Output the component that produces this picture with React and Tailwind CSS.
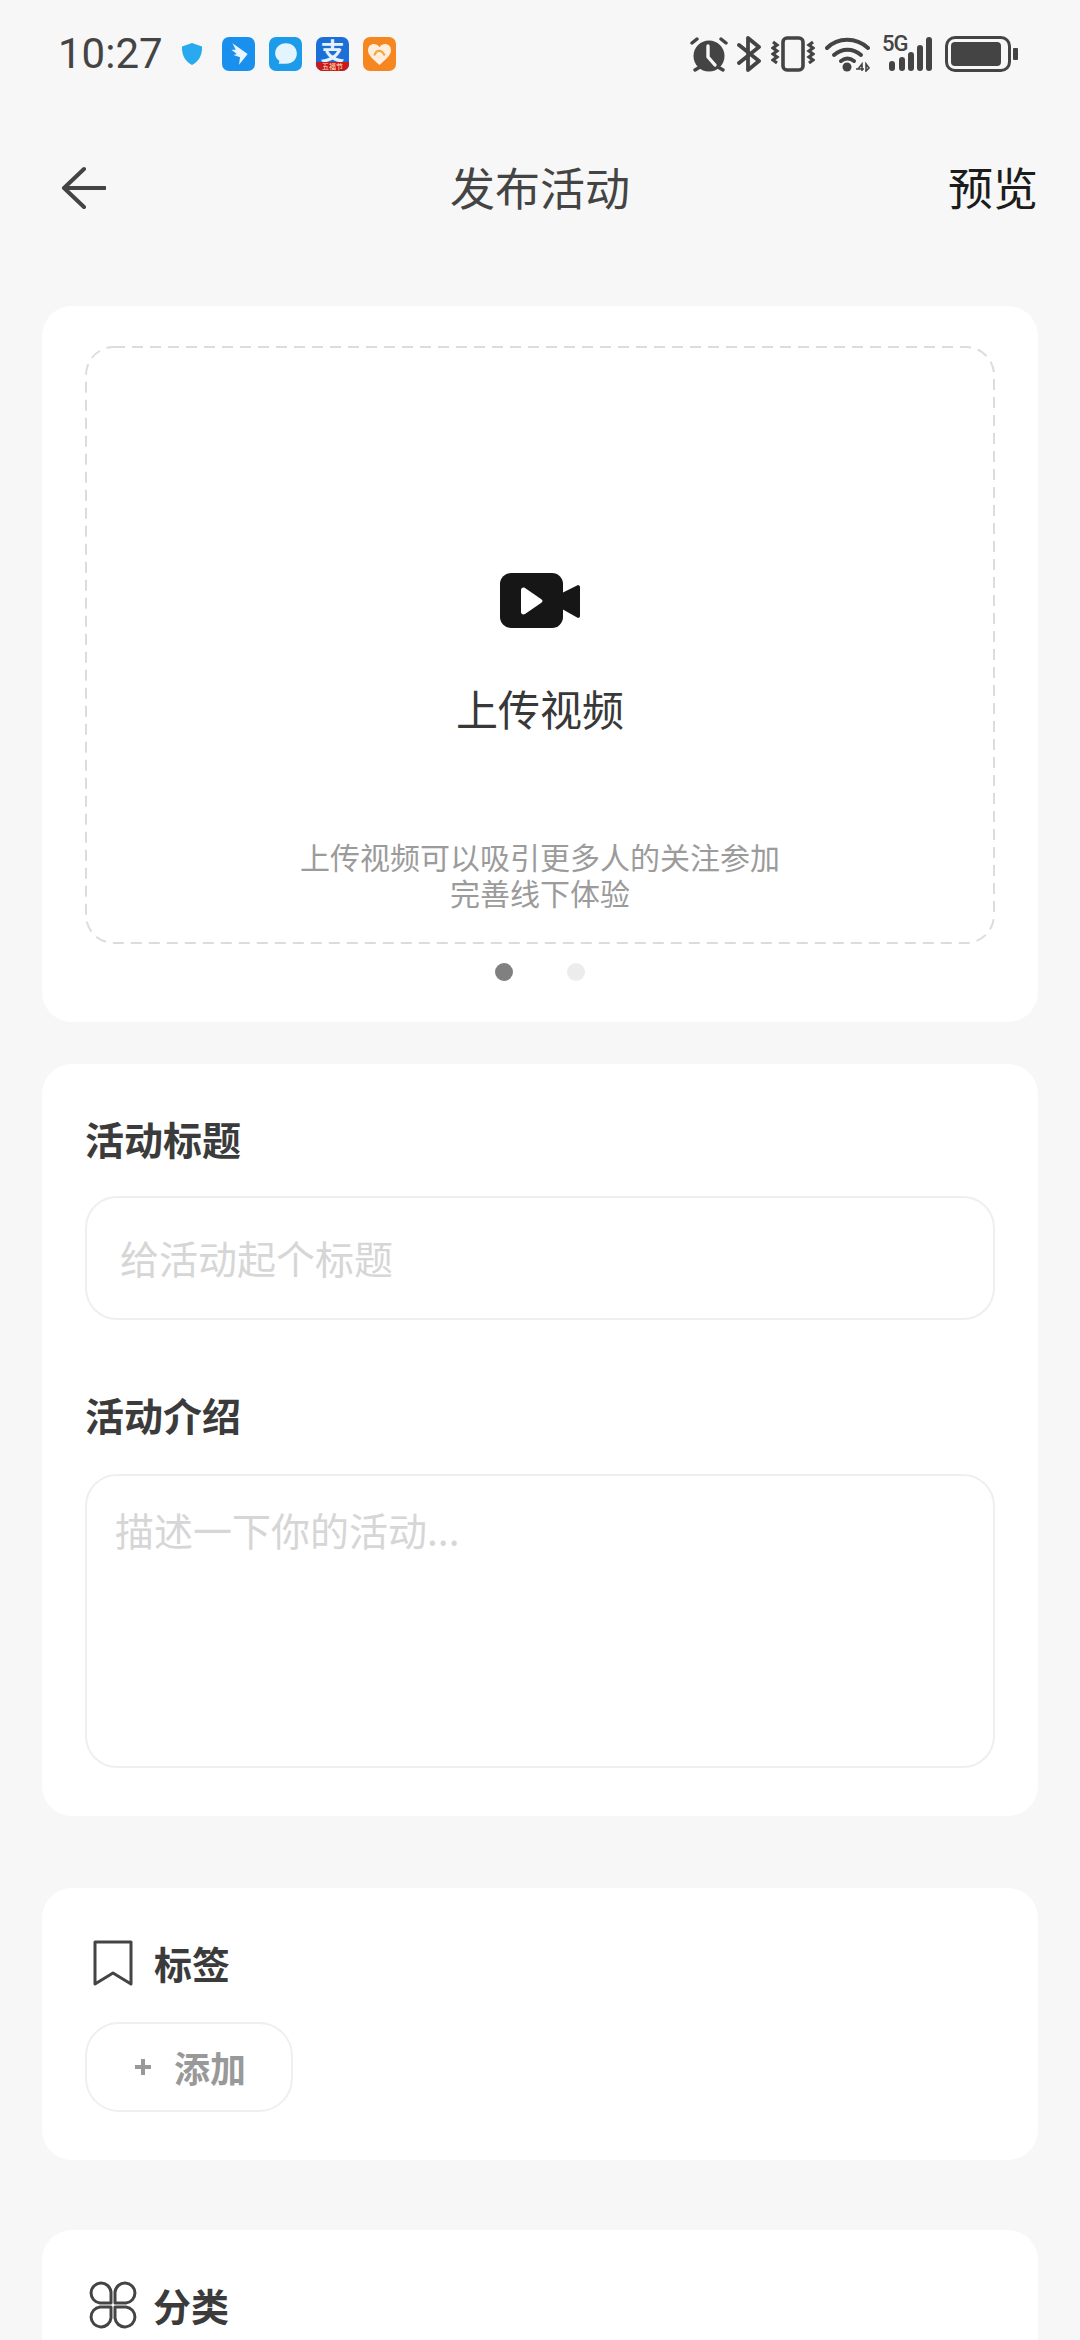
import React from "react";

const cjk = "font-['Noto_Sans_CJK_SC','Noto_Sans',sans-serif]";

function Alarm() {
  return (
    <svg width="38" height="36" viewBox="0 0 38 36" fill="none">
      <circle cx="19" cy="20" r="15.500" fill="#444" />
      <path d="M18 10v11l7 8" stroke="#f7f7f7" strokeWidth="3.400" strokeLinecap="round" strokeLinejoin="round" />
      <path d="M2 7l5-4M36 7l-5-4" stroke="#444" strokeWidth="3.400" strokeLinecap="round" />
      <path d="M5 34l5-3M33 34l-5-3" stroke="#444" strokeWidth="3.400" strokeLinecap="round" />
    </svg>
  );
}
function Bluetooth() {
  return (
    <svg width="24" height="36" viewBox="0 0 24 36" fill="none">
      <path d="M2 27L22 11 11 2v32l11-9L2 9" stroke="#444" strokeWidth="3.800" strokeLinejoin="round" strokeLinecap="round" />
    </svg>
  );
}
function Vibrate() {
  return (
    <svg width="44" height="36" viewBox="0 0 44 36" fill="none">
      <rect x="12" y="2" width="20" height="32" rx="4" stroke="#444" strokeWidth="3.600" />
      <path d="M2 6l4 3-4 3 4 3-4 3 4 3-4 3 4 3" stroke="#444" strokeWidth="3.200" />
      <path d="M42 6l-4 3 4 3-4 3 4 3-4 3 4 3-4 3" stroke="#444" strokeWidth="3.200" />
    </svg>
  );
}
function Wifi() {
  return (
    <svg width="46" height="36" viewBox="0 0 46 36" fill="none">
      <path d="M2 12C13 1 31 1 43 12" stroke="#444" strokeWidth="4" strokeLinecap="round" />
      <path d="M9 19c8-7 19-7 27 0" stroke="#444" strokeWidth="4" strokeLinecap="round" />
      <path d="M16 25c4-3 9-3 13 0" stroke="#444" strokeWidth="4" strokeLinecap="round" />
      <circle cx="22" cy="31" r="4.500" fill="#444" />
      <path d="M33 33l4-5v7M31 33h8M41 28v7l3-3z" stroke="#444" strokeWidth="1.600" />
    </svg>
  );
}
function Signal() {
  return (
    <div className="relative w-[52px] h-[36px]">
      <span className="absolute left-0 top-[-3px] text-[22px] leading-[22px] font-medium text-[#444] tracking-[-1px] font-['Roboto',sans-serif]">5G</span>
      <svg className="absolute inset-0" width="52" height="36" viewBox="0 0 52 36">
        <rect x="7" y="25" width="6" height="10" rx="3" fill="#444" />
        <rect x="17" y="21" width="6" height="14" rx="3" fill="#444" />
        <rect x="26" y="16" width="6" height="19" rx="3" fill="#444" />
        <rect x="35" y="9" width="6" height="26" rx="3" fill="#444" />
        <rect x="44" y="1" width="6" height="34" rx="3" fill="#444" />
      </svg>
    </div>
  );
}
function Battery() {
  return (
    <div className="flex items-center gap-[2px]">
      <div className="w-[66px] h-[36px] rounded-[10px] border-[3px] border-[#444] p-[3px]">
        <div className="w-[50px] h-full rounded-[4px] bg-[#444]" />
      </div>
      <div className="w-[5px] h-[12px] rounded-[1px] bg-[#444]" />
    </div>
  );
}

function Shield() {
  return (
    <svg width="24" height="24" viewBox="0 0 24 24">
      <path d="M12 1l10 3.400c.5 8-3 15-10 18.600C5 19.400 1.500 12.400 2 4.400z" fill="#29a9ee" />
    </svg>
  );
}
function AppWing() {
  return (
    <div className="w-[33px] h-[34px] rounded-[7px] bg-[#1a90ee] flex items-center justify-center">
      <svg width="24" height="26" viewBox="0 0 22 24">
        <path d="M5 2l14 10-8 10 1-7-6-2 3-1-5-4 4 0z" fill="#e9f5ff" />
      </svg>
    </div>
  );
}
function AppChat() {
  return (
    <div className="w-[33px] h-[34px] rounded-[7px] bg-[#1b9bea] flex items-center justify-center">
      <svg width="26" height="26" viewBox="0 0 24 24">
        <path d="M12 2c6 0 10 4 10 9.500S18 21 12 21H5c1-1 1-2 .5-3C3 16 2 14 2 11.500 2 6 6 2 12 2z" fill="#e4f4ff" />
      </svg>
    </div>
  );
}
function AppAlipay() {
  return (
    <div className="w-[33px] h-[34px] rounded-[7px] bg-[#1d6fd8] flex flex-col items-center">
      <span className={`h-[25px] text-[24px] leading-[25px] font-bold text-[#e6f3ff] ${cjk}`}>支</span>
      <div className="w-full h-[9px] rounded-b-[7px] bg-[#c8191c] text-[7px] leading-[9px] text-center text-[#ffe9c0]">五福节</div>
    </div>
  );
}
function AppHeart() {
  return (
    <div className="w-[33px] h-[34px] rounded-[7px] bg-[#f6861f] flex items-center justify-center">
      <svg width="25" height="23" viewBox="0 0 24 22">
        <path d="M12 21C6 16 1 12 1 7c0-7 8-8 11-3 3-5 11-4 11 3 0 5-5 9-11 14z" fill="#fdeedd" />
        <path d="M7 12c2-6 7-6 10 0" stroke="#f6a63f" strokeWidth="2" fill="none" />
      </svg>
    </div>
  );
}

export default function App() {
  return (
    <div className={`w-[1080px] h-[2340px] overflow-hidden bg-[#f7f7f7] flex flex-col ${cjk}`}>
      {/* status bar */}
      <div className="h-[108px] flex items-center justify-between pl-[58px] pr-[62px] shrink-0">
        <div className="flex items-center">
          <span className="w-[100px] text-[42px] leading-[50px] text-[#444] font-['Roboto',sans-serif]">10:27</span>
          <div className="ml-[22px] flex items-center gap-[14px]">
            <div className="mr-[4px]"><Shield /></div>
            <AppWing />
            <AppChat />
            <AppAlipay />
            <AppHeart />
          </div>
        </div>
        <div className="flex items-center">
          <Alarm />
          <div className="ml-[9px]"><Bluetooth /></div>
          <div className="ml-[10px]"><Vibrate /></div>
          <div className="ml-[10px]"><Wifi /></div>
          <div className="ml-[11px]"><Signal /></div>
          <div className="ml-[11px]"><Battery /></div>
        </div>
      </div>

      {/* header */}
      <div className="relative h-[160px] flex items-center justify-center shrink-0">
        <svg className="absolute left-[60px] top-[58px]" width="46" height="44" viewBox="0 0 46 44" fill="none">
          <path d="M24 3L4 22l20 19M4 22h41" stroke="#444" strokeWidth="4" strokeLinecap="round" strokeLinejoin="round" />
        </svg>
        <span className="mt-[-2px] text-[45px] leading-[60px] text-[#444]">发布活动</span>
        <span className="absolute right-[42px] top-[49px] text-[45px] leading-[60px] text-[#1c1c1c]">预览</span>
      </div>

      {/* upload card */}
      <div className="mt-[38px] mx-[42px] h-[716px] shrink-0 rounded-[30px] bg-white px-[43px] pt-[40px]">
        <div className="relative h-[598px] flex flex-col items-center">
          <svg className="absolute inset-0" width="910" height="598" fill="none">
            <rect x="1" y="1" width="908" height="596" rx="28" stroke="#dcdcdc" strokeWidth="2" strokeDasharray="11 7" />
          </svg>
          <svg className="mt-[227px]" width="80" height="56" viewBox="0 0 80 56">
            <rect x="0" y="0" width="63" height="55" rx="11" fill="#161616" />
            <path d="M62 20L78 12c1 0 2 1 2 2v29c0 1-1 2-2 2L62 36z" fill="#161616" />
            <path d="M21 17c0-2 2-3 4-2l16 11c2 1 2 3 0 4L25 41c-2 1-4 0-4-2z" fill="#fff" />
          </svg>
          <div className="mt-[51px] text-[42px] leading-[56px] text-[#383838]">上传视频</div>
          <div className="mt-[102px] text-[30px] leading-[36px] text-[#9b9b9b] text-center">
            <div>上传视频可以吸引更多人的关注参加</div>
            <div>完善线下体验</div>
          </div>
        </div>
        <div className="mt-[19px] flex justify-center gap-[54px]">
          <div className="w-[18px] h-[18px] rounded-full bg-[#808080]" />
          <div className="w-[18px] h-[18px] rounded-full bg-[#ececec]" />
        </div>
      </div>

      {/* form card */}
      <div className="mt-[42px] mx-[42px] h-[752px] shrink-0 rounded-[30px] bg-white px-[43px] pt-[49px]">
        <div className="text-[39px] leading-[50px] font-bold text-[#3b3b3b]">活动标题</div>
        <div className="mt-[33px] h-[124px] rounded-[32px] border-2 border-[#efefef] flex items-center pl-[33px] pb-[2px] text-[39px] leading-[50px] text-[#d6d6d6]">
          给活动起个标题
        </div>
        <div className="mt-[69px] text-[39px] leading-[50px] font-bold text-[#3b3b3b]">活动介绍</div>
        <div className="mt-[35px] h-[294px] rounded-[32px] border-2 border-[#efefef] pl-[28px] pt-[28px] text-[39px] leading-[50px] text-[#d6d6d6]">
          描述一下你的活动...
        </div>
      </div>

      {/* tags card */}
      <div className="mt-[72px] mx-[42px] h-[272px] shrink-0 rounded-[30px] bg-white px-[43px] pt-[50px]">
        <div className="flex items-center h-[50px]">
          <svg className="ml-[8px]" width="40" height="46" viewBox="0 0 40 46" fill="none">
            <path d="M2 2h36v42L20 33 2 44z" stroke="#444" strokeWidth="3" strokeLinejoin="round" />
          </svg>
          <span className="ml-[21px] text-[38px] leading-[50px] font-bold text-[#3b3b3b]">标签</span>
        </div>
        <div className="mt-[34px] w-[208px] h-[90px] rounded-[34px] border-2 border-[#efefef] flex items-center pl-[46px]">
          <svg width="20" height="20" viewBox="0 0 20 20" fill="none">
            <path d="M10 2v16M2 10h16" stroke="#999" strokeWidth="4" />
          </svg>
          <span className="ml-[21px] text-[36px] leading-[46px] font-bold text-[#999]">添加</span>
        </div>
      </div>

      {/* category card */}
      <div className="mt-[70px] mx-[42px] flex-1 rounded-t-[30px] bg-white px-[43px] pt-[50px]">
        <div className="flex items-center h-[50px]">
          <svg className="ml-[3px]" width="50" height="50" viewBox="0 0 50 50" fill="none">
            <path d="M23 23H12a10 10 0 1 1 11-11z" stroke="#444" strokeWidth="3" strokeLinejoin="round" />
            <path d="M27 23h11a10 10 0 1 0-11-11z" stroke="#444" strokeWidth="3" strokeLinejoin="round" />
            <path d="M23 27H12a10 10 0 1 0 11 11z" stroke="#444" strokeWidth="3" strokeLinejoin="round" />
            <path d="M27 27h11a10 10 0 1 1-11 11z" stroke="#444" strokeWidth="3" strokeLinejoin="round" />
          </svg>
          <span className="ml-[15px] text-[38px] leading-[50px] font-bold text-[#3b3b3b]">分类</span>
        </div>
      </div>
    </div>
  );
}
